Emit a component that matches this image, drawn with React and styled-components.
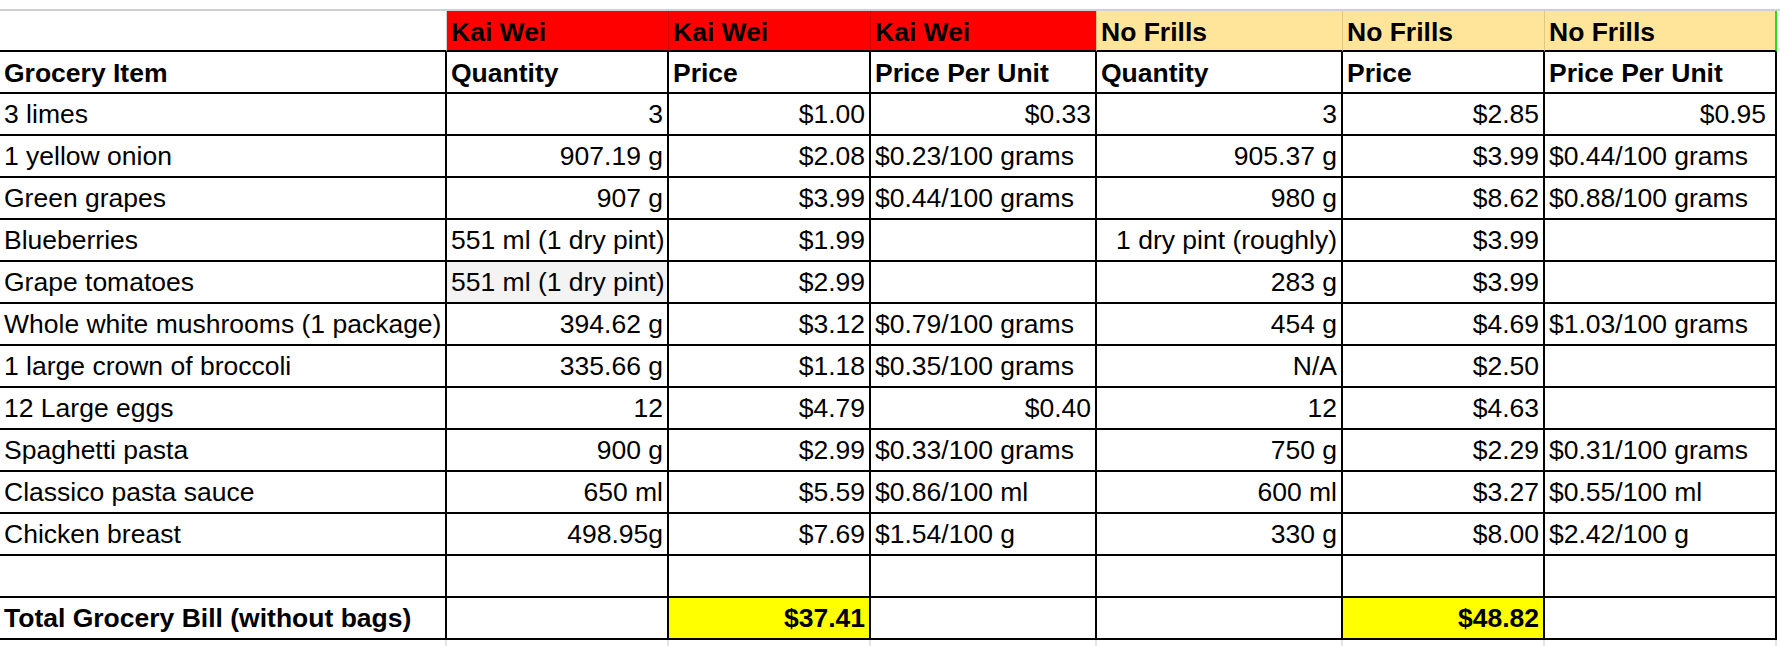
import React from 'react';
import styled, { createGlobalStyle } from 'styled-components';

const GlobalStyle = createGlobalStyle`
  body {
    margin: 0;
    background: #fff;
    font-family: "Liberation Sans", Arial, sans-serif;
  }
`;

const COLUMNS = '447px 222px 202px 226px 246px 202px 232px';

const Sheet = styled.div`
  padding-top: 9px;
  width: 1780px;
  font-size: 26.5px;
  color: #000;
`;

const TopRule = styled.div`
  height: 2px;
  background: #d0d0d0;
`;

const Row = styled.div`
  display: grid;
  grid-template-columns: ${COLUMNS};
  height: ${p => p.$height || 42}px;
`;

const StoreCell = styled.div`
  box-sizing: border-box;
  background: ${p => p.$bg || '#fff'};
  border-right: ${p => p.$edge || '1px solid #d8d8d8'};
  border-bottom: 2px solid #000;
  padding: 3px 4px 0;
  display: flex;
  align-items: center;
  font-weight: bold;
  white-space: nowrap;
  overflow: hidden;
`;

const Cell = styled.div`
  box-sizing: border-box;
  background: ${p => p.$bg || '#fff'};
  border-right: 2px solid #000;
  border-bottom: 2px solid #000;
  padding: 0 4px;
  display: flex;
  align-items: center;
  justify-content: ${p => (p.$align === 'right' ? 'flex-end' : 'flex-start')};
  font-weight: ${p => (p.$bold ? 'bold' : 'normal')};
  white-space: nowrap;
  overflow: hidden;

  &:last-child {
    padding-right: 9px;
  }
`;

const HeadCell = styled(Cell)`
  padding-top: 3px;
  font-weight: bold;
`;

const TailCell = styled.div`
  box-sizing: border-box;
  border-right: 2px solid #e4e4e4;
`;

const stores = [
  { name: '', bg: '#fff', edge: '1px solid #cfcfcf' },
  { name: 'Kai Wei', bg: '#ff0000', edge: '1px solid #d40000' },
  { name: 'Kai Wei', bg: '#ff0000', edge: '1px solid #d40000' },
  { name: 'Kai Wei', bg: '#ff0000', edge: '1px solid #e0c080' },
  { name: 'No Frills', bg: '#ffe599', edge: '1px solid #e0c884' },
  { name: 'No Frills', bg: '#ffe599', edge: '1px solid #e0c884' },
  { name: 'No Frills', bg: '#ffe599', edge: '2px solid #22dd22' },
];

const headings = ['Grocery Item', 'Quantity', 'Price', 'Price Per Unit', 'Quantity', 'Price', 'Price Per Unit'];

// r = right aligned, l = left aligned
const items = [
  ['3 limes', ['3', 'r'], ['$1.00', 'r'], ['$0.33', 'r'], ['3', 'r'], ['$2.85', 'r'], ['$0.95', 'r']],
  ['1 yellow onion', ['907.19 g', 'r'], ['$2.08', 'r'], ['$0.23/100 grams', 'l'], ['905.37 g', 'r'], ['$3.99', 'r'], ['$0.44/100 grams', 'l']],
  ['Green grapes', ['907 g', 'r'], ['$3.99', 'r'], ['$0.44/100 grams', 'l'], ['980 g', 'r'], ['$8.62', 'r'], ['$0.88/100 grams', 'l']],
  ['Blueberries', ['551 ml (1 dry pint)', 'l'], ['$1.99', 'r'], ['', 'l'], ['1 dry pint (roughly)', 'r'], ['$3.99', 'r'], ['', 'l']],
  ['Grape tomatoes', ['551 ml (1 dry pint)', 'l', '#f3f3f3'], ['$2.99', 'r'], ['', 'l'], ['283 g', 'r'], ['$3.99', 'r'], ['', 'l']],
  ['Whole white mushrooms (1 package)', ['394.62 g', 'r'], ['$3.12', 'r'], ['$0.79/100 grams', 'l'], ['454 g', 'r'], ['$4.69', 'r'], ['$1.03/100 grams', 'l']],
  ['1 large crown of broccoli', ['335.66 g', 'r'], ['$1.18', 'r'], ['$0.35/100 grams', 'l'], ['N/A', 'r'], ['$2.50', 'r'], ['', 'l']],
  ['12 Large eggs', ['12', 'r'], ['$4.79', 'r'], ['$0.40', 'r'], ['12', 'r'], ['$4.63', 'r'], ['', 'l']],
  ['Spaghetti pasta', ['900 g', 'r'], ['$2.99', 'r'], ['$0.33/100 grams', 'l'], ['750 g', 'r'], ['$2.29', 'r'], ['$0.31/100 grams', 'l']],
  ['Classico pasta sauce', ['650 ml', 'r'], ['$5.59', 'r'], ['$0.86/100 ml', 'l'], ['600 ml', 'r'], ['$3.27', 'r'], ['$0.55/100 ml', 'l']],
  ['Chicken breast', ['498.95g', 'r'], ['$7.69', 'r'], ['$1.54/100 g', 'l'], ['330 g', 'r'], ['$8.00', 'r'], ['$2.42/100 g', 'l']],
];

export default function App() {
  return (
    <>
      <GlobalStyle />
      <Sheet>
        <TopRule />
        <Row $height={41}>
          {stores.map((s, i) => (
            <StoreCell key={i} $bg={s.bg} $edge={s.edge}>{s.name}</StoreCell>
          ))}
        </Row>
        <Row>
          {headings.map((h, i) => (
            <HeadCell key={i}>{h}</HeadCell>
          ))}
        </Row>
        {items.map((row, ri) => (
          <Row key={ri}>
            <Cell>{row[0]}</Cell>
            {row.slice(1).map(([text, align, bg], ci) => (
              <Cell key={ci} $align={align === 'r' ? 'right' : 'left'} $bg={bg}>{text}</Cell>
            ))}
          </Row>
        ))}
        <Row>
          {headings.map((_, i) => <Cell key={i} />)}
        </Row>
        <Row>
          <Cell $bold>Total Grocery Bill (without bags)</Cell>
          <Cell />
          <Cell $bold $align="right" $bg="#ffff00">$37.41</Cell>
          <Cell />
          <Cell />
          <Cell $bold $align="right" $bg="#ffff00">$48.82</Cell>
          <Cell />
        </Row>
        <Row $height={6}>
          {headings.map((_, i) => <TailCell key={i} />)}
        </Row>
      </Sheet>
    </>
  );
}
